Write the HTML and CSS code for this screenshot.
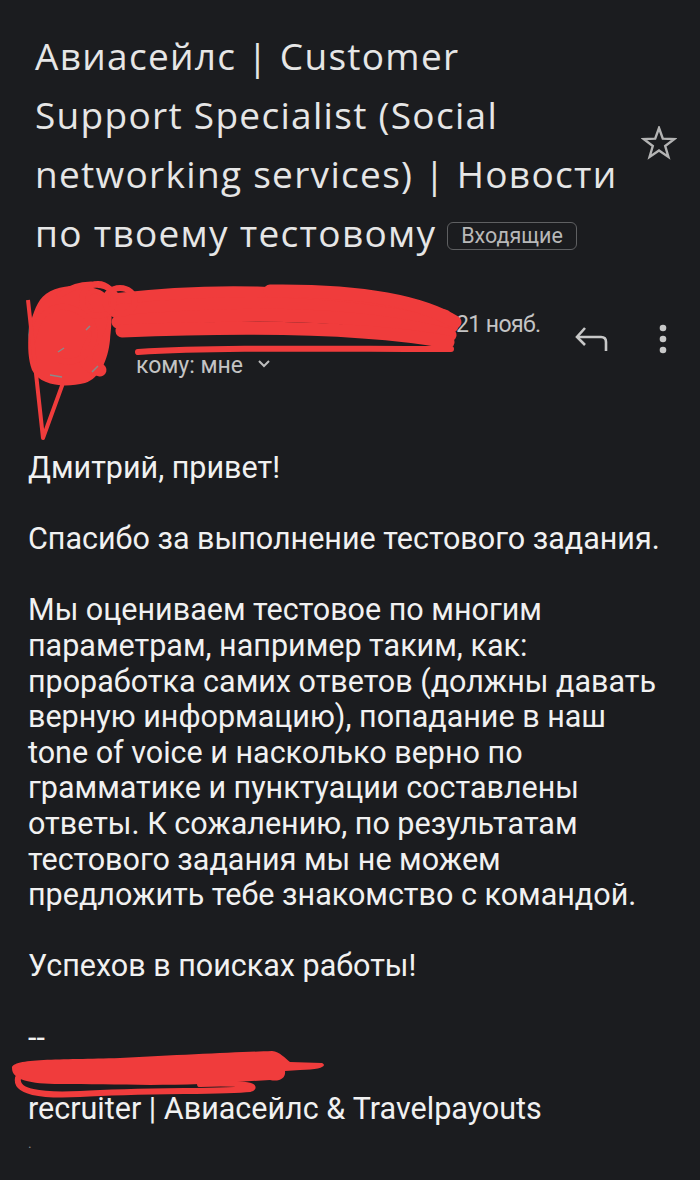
FILE: index.html
```html
<!DOCTYPE html>
<html lang="ru">
<head>
    <meta charset="UTF-8">
    <meta name="viewport" content="width=device-width, initial-scale=1.0">
    <title>Авиасейлс | Customer Support Specialist</title>
    <link rel="stylesheet" href="styles.css">
</head>
<body>

    <main class="mail">
        <header class="subject-row">
            <h1 class="subject">Авиасейлс | Customer<br>Support Specialist (Social<br>networking services) | Новости<br>по твоему тестовому <span class="label">Входящие</span></h1>
            <svg class="star" width="36" height="36" viewBox="0 0 36 36">
                <polygon points="18,2 21.8,12.7 33.2,13.1 24.2,20 27.4,30.9 18,24.5 8.6,30.9 11.8,20 2.8,13.1 14.2,12.7" />
            </svg>
        </header>

        <section class="sender">
            <div class="avatar"></div>
            <div class="meta">
                <div class="meta-top">
                    <span class="sender-name"></span>
                    <span class="date">21 нояб.</span>
                </div>
                <div class="recipient">
                    кому: мне
                    <svg class="chevron" width="14" height="10" viewBox="0 0 14 10">
                        <polyline points="2,2 7,7 12,2" />
                    </svg>
                </div>
            </div>
            <div class="actions">
                <svg class="reply" width="34" height="34" viewBox="0 0 34 34">
                    <polyline points="10,6 2,15 10,23" />
                    <path d="M2 15 H26 Q31 15 31 20 V29" />
                </svg>
                <svg class="more" width="16" height="34" viewBox="0 0 16 34">
                    <circle cx="8" cy="6" r="3.3" />
                    <circle cx="8" cy="17" r="3.3" />
                    <circle cx="8" cy="28" r="3.3" />
                </svg>
            </div>

            <!-- закрашено -->
            <svg class="scribble" width="470" height="180" viewBox="0 270 470 180">
                <path class="fill" d="M40 300 C50 285 80 282 100 290 C115 297 112 320 110 340 C108 360 100 378 85 383 C65 388 40 386 32 370 C25 350 28 318 40 300 Z" />
                <path class="thick" d="M112 300 C200 290 300 286 445 316" />
                <path class="thick" d="M115 311 C220 300 330 298 452 326" />
                <path class="thick" d="M118 322 C230 312 350 310 450 335" />
                <path class="thick" d="M122 331 C240 326 360 326 448 342" />
                <path class="thick" d="M270 291 C350 290 415 298 455 322" />
                <path class="thick" d="M95 300 C120 330 60 360 100 370" />
                <circle class="line" cx="98" cy="300" r="16" />
                <ellipse class="line" cx="120" cy="301" rx="15" ry="13" />
                <path class="line" d="M60 295 C80 280 110 282 116 296" />
                <path class="line" d="M33 340 C40 300 70 300 90 320 C105 340 80 370 60 360" />
                <path class="line" d="M138 352 C220 347 330 349 451 349" />
                <path class="speck" d="M58 352 L64 348 M86 330 L90 326 M50 375 L62 377 M92 372 L98 366" />
                <path class="thin" d="M28 300 L43 438 L63 383" />
            </svg>
        </section>

        <article class="message">
            <p>Дмитрий, привет!</p>
            <p>Спасибо за выполнение тестового задания.</p>
            <p>Мы оцениваем тестовое по многим параметрам, например таким, как: проработка самих ответов (должны давать верную информацию), попадание в наш tone of voice и насколько верно по грамматике и пунктуации составлены ответы. К сожалению, по результатам тестового задания мы не можем предложить тебе знакомство с командой.</p>
            <p>Успехов в поисках работы!</p>
            <div class="signature">
                <div>--</div>
                <div class="sig-name">
                    <svg class="scribble-sig" width="340" height="50" viewBox="0 1050 340 50">
                        <path class="fill" d="M12 1068 C12 1058 60 1060 120 1058 C180 1055 240 1052 272 1051 C280 1052 285 1058 290 1062 L322 1063 C328 1066 320 1070 300 1070 L285 1071 C286 1078 280 1082 270 1080 L200 1084 C150 1086 100 1084 60 1084 C30 1084 12 1080 12 1068 Z" />
                        <path class="line" d="M18 1078 C15 1092 40 1096 80 1094 C150 1090 220 1092 250 1089 C260 1086 240 1082 200 1084" />
                    </svg>
                </div>
                <div>recruiter | Авиасейлс &amp; Travelpayouts</div>
                <div class="tail">.</div>
            </div>
        </article>
    </main>

</body>
</html>
```

FILE: styles.css
```css
body {
    margin: 0;
    background-color: #1b1c1f;
    color: #f1f1f1;
    font-family: Roboto, "Noto Sans", sans-serif;
}
.subject-row {
    display: flex;
    justify-content: space-between;
    padding: 26px 23px 0 35px;
}
.subject {
    margin: 0;
    font-family: "Open Sans", sans-serif;
    font-weight: 400;
    font-size: 37px;
    line-height: 59px;
    letter-spacing: 1.3px;
    color: #e6e6e6;
}
.label {
    display: inline-block;
    vertical-align: 4px;
    padding: 0 13px;
    font-family: Roboto, sans-serif;
    font-size: 21.5px;
    line-height: 26px;
    letter-spacing: 0;
    color: #b8b8b8;
    border: 1.5px solid #5f6062;
    border-radius: 6px;
}
.star {
    align-self: center;
    fill: none;
    stroke: #b4b4b4;
    stroke-width: 2.4;
}
.sender {
    position: relative;
    display: flex;
    height: 180px;
    margin-top: 8px;
    padding: 0 29px 0 28px;
    box-sizing: border-box;
}
.avatar {
    width: 80px;
    height: 80px;
    margin-top: 25px;
    border-radius: 50%;
    background-color: #5a5c60;
}
.meta {
    flex: 1;
    margin-left: 28px;
    padding-top: 40px;
    font-size: 23px;
    line-height: 29px;
    color: #c4c4c4;
}
.meta-top {
    display: flex;
}
.sender-name {
    width: 320px;
}
.date {
    letter-spacing: -0.6px;
}
.recipient {
    margin-top: 12px;
}
.chevron {
    margin-left: 8px;
    vertical-align: 4px;
    fill: none;
    stroke: #bdbdbd;
    stroke-width: 2;
}
.actions {
    display: flex;
    gap: 46px;
    margin-top: 52px;
}
.reply {
    fill: none;
    stroke: #c8c8c8;
    stroke-width: 2.6;
}
.more {
    fill: #c8c8c8;
}
.scribble, .scribble-sig {
    position: absolute;
    left: 0;
    top: 0;
    pointer-events: none;
}
.scribble .fill, .scribble-sig .fill {
    fill: #f03c3c;
}
.scribble .thick {
    fill: none;
    stroke: #f03c3c;
    stroke-width: 13;
    stroke-linecap: round;
}
.scribble .line, .scribble-sig .line {
    fill: none;
    stroke: #f03c3c;
    stroke-width: 6;
    stroke-linecap: round;
}
.scribble .speck {
    fill: none;
    stroke: #8a8a8a;
    stroke-width: 1.5;
}
.scribble .thin {
    fill: none;
    stroke: #f03c3c;
    stroke-width: 4;
    stroke-linejoin: round;
}
.message {
    padding: 0 36px 0 28px;
    font-size: 30.5px;
    line-height: 35.6px;
}
.message p {
    margin: 0 0 35.6px;
}
.sig-name {
    position: relative;
    height: 35.6px;
}
.scribble-sig {
    left: -28px;
    top: -5px;
}
.tail {
    font-size: 14px;
    color: #888;
}
```
